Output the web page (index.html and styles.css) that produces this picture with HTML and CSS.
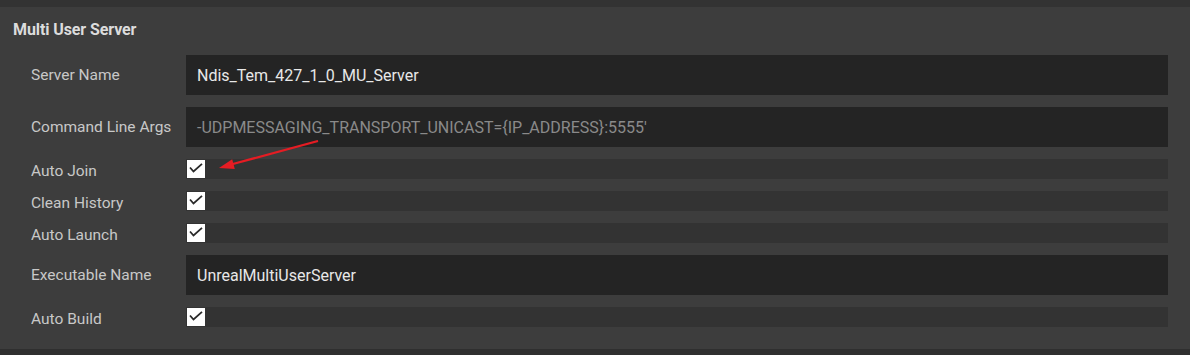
FILE: index.html
```html
<!DOCTYPE html>
<html>
<head>
<meta charset="utf-8">
<link rel="stylesheet" href="styles.css">
</head>
<body>
<div class="page">
  <div class="topstrip"></div>
  <section class="panel">
    <h2 class="title">Multi User Server</h2>
    <div class="rows">
      <div class="row tall">
        <div class="label">Server Name</div>
        <div class="field"><span class="value">Ndis_Tem_427_1_0_MU_Server</span></div>
      </div>
      <div class="row tall">
        <div class="label">Command Line Args</div>
        <div class="field"><span class="value dim">-UDPMESSAGING_TRANSPORT_UNICAST={IP_ADDRESS}:5555'</span></div>
      </div>
      <div class="row short">
        <div class="label">Auto Join</div>
        <div class="bar"><span class="check"><svg viewBox="0 0 18 18" width="18" height="18"><path d="M3 7.5 L6.5 11.5 L15 3.8" fill="none" stroke="#2a2a2a" stroke-width="1.8"/></svg></span></div>
      </div>
      <div class="row short">
        <div class="label">Clean History</div>
        <div class="bar"><span class="check"><svg viewBox="0 0 18 18" width="18" height="18"><path d="M3 7.5 L6.5 11.5 L15 3.8" fill="none" stroke="#2a2a2a" stroke-width="1.8"/></svg></span></div>
      </div>
      <div class="row short">
        <div class="label">Auto Launch</div>
        <div class="bar"><span class="check"><svg viewBox="0 0 18 18" width="18" height="18"><path d="M3 7.5 L6.5 11.5 L15 3.8" fill="none" stroke="#2a2a2a" stroke-width="1.8"/></svg></span></div>
      </div>
      <div class="row tall">
        <div class="label">Executable Name</div>
        <div class="field"><span class="value">UnrealMultiUserServer</span></div>
      </div>
      <div class="row short">
        <div class="label">Auto Build</div>
        <div class="bar"><span class="check"><svg viewBox="0 0 18 18" width="18" height="18"><path d="M3 7.5 L6.5 11.5 L15 3.8" fill="none" stroke="#2a2a2a" stroke-width="1.8"/></svg></span></div>
      </div>
    </div>
    <svg class="arrow" width="104" height="32" viewBox="0 0 104 32">
      <line x1="101" y1="1" x2="14" y2="24.5" stroke="#e51c23" stroke-width="2.2"/>
      <polygon points="2,28 15.2,19.2 17.8,28.9" fill="#e51c23"/>
    </svg>
  </section>
  <div class="bottomstrip"></div>
</div>
</body>
</html>
```

FILE: styles.css
```css
html, body {
  margin: 0;
  padding: 0;
  background: #2f2f2f;
}

.page {
  width: 1190px;
  height: 355px;
  overflow: hidden;
  font-family: Roboto, "Liberation Sans", sans-serif;
}

.topstrip {
  height: 7px;
  background: #333333;
}

.panel {
  position: relative;
  background: #3d3d3d;
  height: 342px;
  box-sizing: border-box;
  padding: 12px 22px 0 0;
}

.title {
  margin: 0 0 0 13px;
  height: 36px;
  line-height: 22px;
  font-size: 16px;
  font-weight: bold;
  color: #dcdcdc;
  letter-spacing: -0.1px;
}

.rows {
  display: flex;
  flex-direction: column;
  gap: 12px;
}

.row {
  display: flex;
  align-items: center;
}

.row.tall { height: 40px; }
.row.short { height: 20px; }

.label {
  width: 143px;
  margin-left: 31px;
  margin-right: 12px;
  font-size: 15.5px;
  color: #c8c8c8;
  white-space: nowrap;
  overflow: hidden;
}

.row.short .label {
  position: relative;
  top: 2px;
}

.field {
  flex: 1;
  height: 40px;
  background: #242424;
  display: flex;
  align-items: center;
  padding-left: 11px;
}

.value {
  font-size: 16px;
  color: #e8e8e8;
  white-space: nowrap;
}

.value.dim {
  color: #8a8a8a;
}

.bar {
  flex: 1;
  height: 20px;
  background: #333333;
  display: flex;
  align-items: center;
  padding-left: 1px;
}

.check {
  width: 18px;
  height: 18px;
  background: #ffffff;
  display: block;
}

.check svg {
  display: block;
}

.arrow {
  position: absolute;
  left: 217px;
  top: 133px;
}

.bottomstrip {
  height: 6px;
  background: #2f2f2f;
}
```
